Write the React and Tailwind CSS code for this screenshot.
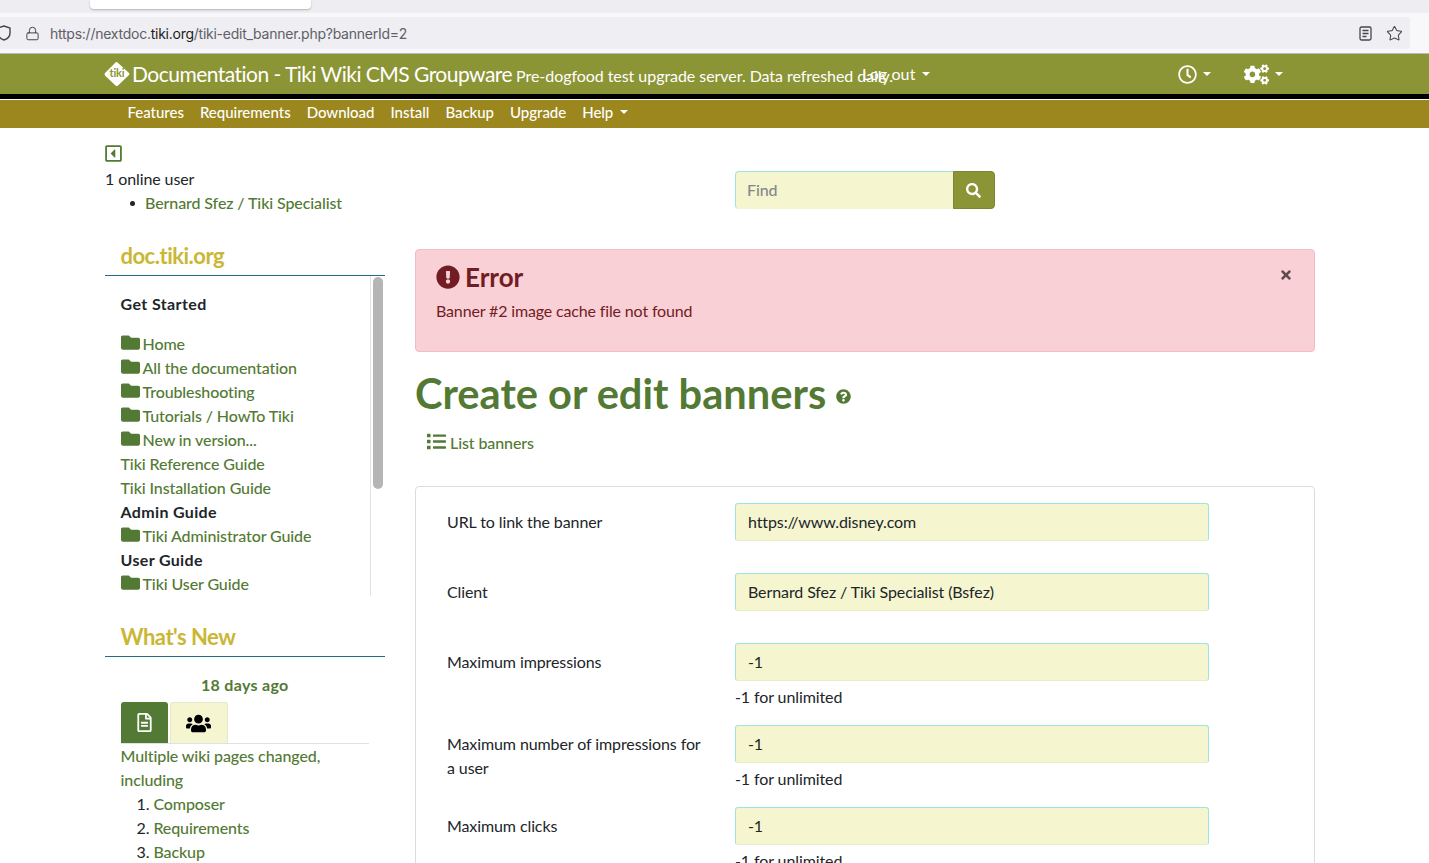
import React from "react";
import { FaFolder, FaRegClock, FaCogs, FaSearch, FaList, FaRegFileAlt, FaUsers, FaExclamationCircle, FaQuestionCircle, FaRegCaretSquareLeft, FaTimes } from "react-icons/fa";
import { Lock, Star } from "lucide-react";

const Caret = ({ className = "" }) => (
  <span className={`inline-block w-0 h-0 border-x-[4px] border-x-transparent border-t-[4px] border-t-current ${className}`} />
);

const TikiLogo = () => (
  <svg width="26" height="26" viewBox="0 0 26 26" className="shrink-0">
    <path d="M13 1 L25 12 Q26 13 25 14 L14 24.5 Q13 25.5 11.5 24.5 L1 14.5 Q0 13 1 12 L11 2 Q12 0.5 13 1Z" fill="#ffffff" />
    <text x="13" y="16" textAnchor="middle" fontSize="11" fontWeight="700" fill="#8c9535" fontFamily="Lato, sans-serif">tiki</text>
  </svg>
);

const Nav = ["Features", "Requirements", "Download", "Install", "Backup", "Upgrade"];

const menu = [
  { t: "Home", f: 1 },
  { t: "All the documentation", f: 1 },
  { t: "Troubleshooting", f: 1 },
  { t: "Tutorials / HowTo Tiki", f: 1 },
  { t: "New in version...", f: 1 },
  { t: "Tiki Reference Guide" },
  { t: "Tiki Installation Guide" },
  { t: "Admin Guide", b: 1 },
  { t: "Tiki Administrator Guide", f: 1 },
  { t: "User Guide", b: 1 },
  { t: "Tiki User Guide", f: 1 },
];

const Field = ({ label, value, help }) => (
  <div className={`flex ${help ? "mb-4" : "mb-8"}`}>
    <div className="w-[288px] shrink-0 pr-6 pt-[7px] text-[#212529]">{label}</div>
    <div className="w-[474px]">
      <div className="h-[38px] bg-[#f5f6d0] border border-[#9fe3e0] border-b-[#e9edc8] rounded-[3px] px-[12px] leading-[36px] text-[#212529]">{value}</div>
      {help && <div className="mt-1 text-[#212529]">{help}</div>}
    </div>
  </div>
);

export default function App() {
  return (
    <div className="h-[863px] overflow-hidden bg-white text-[16px] leading-6 text-[#212529] tracking-[-0.1px]" style={{ fontFamily: "Lato, sans-serif" }}>
      {/* browser chrome */}
      <div className="h-[13px] bg-[#eeeef2] pl-[90px]">
        <div className="w-[221px] h-[9px] bg-white rounded-b-[4px] shadow-[0_1px_2px_rgba(0,0,0,0.25)]" />
      </div>
      <div className="h-[41px] bg-[#f8f8fa] border-b border-[#b9bcb6] pt-1 pr-[19px]">
        <div className="h-8 bg-[#eeeef3] rounded-r-[3px] flex items-center text-[#5f6066] overflow-hidden">
          <svg width="14" height="16" viewBox="0 0 14 16" className="-ml-[3px] shrink-0" fill="none" stroke="#45464c" strokeWidth="1.4">
            <path d="M7 1 L13 3 V8 C13 11.5 10 14 7 15 C4 14 1 11.5 1 8 V3Z" />
          </svg>
          <Lock size={15} strokeWidth={1.6} className="ml-[14px] shrink-0" color="#45464c" />
          <div className="ml-[10px] pt-px text-[14px] tracking-[-0.25px]" style={{ fontFamily: "Inter, sans-serif" }}>
            https://nextdoc.<span className="text-[#1c1c20]">tiki.org</span>/tiki-edit_banner.php?bannerId=2
          </div>
          <svg width="13" height="15" viewBox="0 0 13 15" className="ml-auto mr-[14px] shrink-0" fill="none" stroke="#45464c" strokeWidth="1.3">
            <rect x="1" y="1" width="11" height="13" rx="1.5" />
            <path d="M3.5 4.5h6M3.5 7.5h6M3.5 10.5h4" />
          </svg>
          <Star size={17} strokeWidth={1.5} className="mr-[7px] shrink-0" color="#45464c" />
        </div>
      </div>

      {/* top bar */}
      <div className="h-10 bg-[#8c9535] flex items-center pl-[104px] text-white">
        <TikiLogo />
        <span className="ml-[2px] text-[21px] tracking-[-0.52px] whitespace-nowrap">Documentation - Tiki Wiki CMS Groupware</span>
        <span className="ml-[4px] text-[16px] pt-[3px] tracking-[-0.05px] whitespace-nowrap">Pre-dogfood test upgrade server. Data refreshed daily.</span>
        <span className="-ml-[31px] text-[16px] tracking-[0.1px] flex items-center whitespace-nowrap">Log out<Caret className="ml-[7px]" /></span>
        <FaRegClock size={19} className="ml-[248px]" />
        <Caret className="ml-[6px]" />
        <FaCogs size={25} className="ml-[33px]" />
        <Caret className="ml-[6px]" />
      </div>
      <div className="h-[5px] bg-black" />
      <div className="h-px bg-white" />

      {/* nav */}
      <div className="h-[28px] bg-[#9c871e] flex items-center pl-[127.5px] pb-1 text-white text-[15px] gap-4 font-medium tracking-[-0.03px]">
        {Nav.map((n) => <span key={n}>{n}</span>)}
        <span className="flex items-center">Help<Caret className="ml-[7px]" /></span>
      </div>

      {/* page */}
      <div className="pl-[105px]">
        <div className="flex h-[121px]">
          <div className="w-[280px] shrink-0 pt-[16px]">
            <FaRegCaretSquareLeft size={19} className="text-[#537a34] -ml-[1.5px]" />
            <div className="mt-[4px] leading-6">1 online user</div>
            <div className="flex items-center pl-[25px]">
              <span className="w-[5px] h-[5px] rounded-full bg-[#212529] mr-[10px]" />
              <span className="text-[#537a34] font-medium">Bernard Sfez / Tiki Specialist</span>
            </div>
          </div>
          <div className="ml-[350px] pt-[43px]">
            <div className="flex h-[38px] w-[260px]">
              <div className="flex-1 bg-[#f5f6d0] border-t border-l border-[#9fe3e0] rounded-l-[4px] px-[11px] leading-[36px] text-[#85888a] font-medium">Find</div>
              <div className="w-[42px] bg-[#8c9535] border border-[#7d8530] rounded-r-[4px] flex items-center justify-center text-white pr-[2px]">
                <FaSearch size={15} />
              </div>
            </div>
          </div>
        </div>

        <div className="flex gap-[30px]">
          {/* sidebar */}
          <div className="w-[280px] shrink-0">
            <div className="h-[27px] border-b border-[#1f6f80] pl-[15.5px] text-[22px] leading-[13px] font-bold text-[#c9b735] tracking-[-0.5px]">doc.tiki.org</div>
            <div className="h-[320px] flex overflow-hidden">
              <div className="w-[265px] shrink-0 pl-[15.5px] pt-4">
                <div className="font-bold mb-4 text-[#212529] tracking-[0.4px]">Get Started</div>
                {menu.map((m) => (
                  <div key={m.t} className={`flex items-center h-6 ${m.b ? "font-bold text-[#212529] tracking-[0.35px]" : "text-[#537a34] font-medium"}`}>
                    {m.f && <FaFolder size={19} className="mr-[3px] shrink-0 -mt-[3px]" />}
                    <span>{m.t}</span>
                  </div>
                ))}
              </div>
              <div className="w-[15px] border-l border-[#e2e2e2] pl-[2px] pt-[1px]">
                <div className="w-[10px] h-[212px] rounded-full bg-[#b5b5b5]" />
              </div>
            </div>
            <div className="mt-[25px] h-[36px] border-b border-[#1f6f80] pl-[15.5px] text-[22px] leading-[32px] font-bold text-[#c9b735] tracking-[-0.5px]">What's New</div>
            <div className="pl-[15.5px] pr-4 pt-[16px]">
              <div className="text-center font-bold text-[#537a34] tracking-[0.3px]">18 days ago</div>
              <div className="flex mt-[5px] h-[42px] border-b border-[#dee2e6] mr-0">
                <div className="w-[47px] bg-[#537a34] rounded-t-[3px] flex items-center justify-center text-white"><FaRegFileAlt size={19} /></div>
                <div className="w-[58px] ml-[2px] bg-[#f5f6d0] border border-[#e6e8cc] border-b-0 rounded-t-[3px] flex items-center justify-center text-black"><FaUsers size={25} /></div>
              </div>
              <div className="text-[#537a34] font-medium">Multiple wiki pages changed, including</div>
              <ol className="pl-[16px]">
                {["Composer", "Requirements", "Backup"].map((x, i) => (
                  <li key={x}><span className="text-[#212529] font-normal">{i + 1}.</span> <span className="text-[#537a34] font-medium">{x}</span></li>
                ))}
              </ol>
            </div>
          </div>

          {/* content */}
          <div className="w-[900px] shrink-0">
            <div className="h-[103px] bg-[#f8d0d6] border border-[#f3bcc4] rounded-[4px] pl-5 pr-5 pt-[11px] text-[#721c24] relative">
              <div className="flex items-center text-[26px] leading-[32px] font-bold tracking-normal">
                <FaExclamationCircle size={24} className="mr-[5px]" />
                Error
              </div>
              <div className="mt-[6px] tracking-[-0.15px]">Banner #2 image cache file not found</div>
              <FaTimes size={14} className="absolute right-[21px] top-[18px] text-[#5f4a4d]" />
            </div>
            <div className="mt-[17px] flex items-center h-[48px] text-[#537a34]">
              <span className="text-[41.6px] font-bold tracking-normal">Create or edit banners</span>
              <FaQuestionCircle size={15} className="ml-[10px] mt-[6px]" />
            </div>
            <div className="mt-[14px] flex items-center pl-3 h-6 text-[#537a34] font-medium">
              <FaList size={19} className="mr-[4px] -mt-[3px]" />List banners
            </div>
            <div className="mt-[31px] border border-[#dcdcdc] rounded-[4px] pt-4 pl-[31px] pb-10">
              <Field label="URL to link the banner" value="https://www.disney.com" />
              <Field label="Client" value="Bernard Sfez / Tiki Specialist (Bsfez)" />
              <Field label="Maximum impressions" value="-1" help="-1 for unlimited" />
              <Field label="Maximum number of impressions for a user" value="-1" help="-1 for unlimited" />
              <Field label="Maximum clicks" value="-1" help="-1 for unlimited" />
            </div>
          </div>
        </div>
      </div>
    </div>
  );
}
